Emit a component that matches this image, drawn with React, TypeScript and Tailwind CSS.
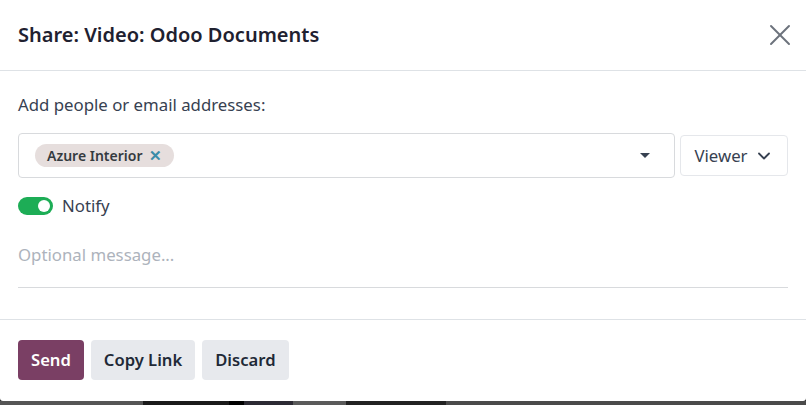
import { X, ChevronDown } from 'lucide-react';

const font = { fontFamily: '"Noto Sans", "Open Sans", sans-serif' };

export default function App() {
  return (
    <div className="w-[806px] h-[405px] bg-[#222] flex flex-col overflow-hidden" style={font}>
      <div className="bg-white h-[401px] flex flex-col rounded-b-[3px]">
        {/* header */}
        <div className="h-[71px] flex items-center justify-between pl-[18px] pr-[8px] border-b border-[#dee2e6]">
          <h1 className="text-[20px] font-semibold text-[#1f2130]">Share: Video: Odoo Documents</h1>
          <button className="text-[#6c727c]">
            <X className="w-[36px] h-[36px]" strokeWidth={1.3} />
          </button>
        </div>

        {/* body */}
        <div className="flex-1 px-[18px] pt-[22px] border-b border-[#dee2e6]">
          <p className="text-[16.8px] text-[#374151] leading-[24px]">Add people or email addresses:</p>
          <div className="mt-[16px] flex items-center gap-[5px]">
            <div className="flex-1 h-[45px] border border-[#d8dadd] rounded-[4px] flex items-center pl-[16px] pr-[24px]">
              <span className="h-[23px] px-[12px] rounded-full bg-[#e6dedd] flex items-center gap-[7px] text-[14px] font-semibold text-[#343a40]">
                Azure Interior
                <span className="text-[#3a8ca8] text-[15px] leading-none font-bold">✕</span>
              </span>
              <span className="ml-auto w-0 h-0 border-l-[5px] border-r-[5px] border-t-[5px] border-l-transparent border-r-transparent border-t-[#374151]" />
            </div>
            <button className="w-[108px] h-[41px] border border-[#e5e7eb] rounded-[4px] flex items-center justify-center gap-[6px] text-[16.8px] text-[#374151]">
              Viewer
              <ChevronDown className="w-[20px] h-[20px]" strokeWidth={2.2} />
            </button>
          </div>

          <div className="mt-[15px] flex items-center gap-[9px]">
            <span className="w-[35px] h-[18px] rounded-full bg-[#1dad56] flex items-center justify-end pr-[3px]">
              <span className="w-[12px] h-[12px] rounded-full bg-white" />
            </span>
            <span className="text-[16.8px] text-[#374151]">Notify</span>
          </div>

          <div className="mt-[25px] pb-[20px] border-b border-[#d8dadd] text-[16.8px] text-[#adb3bc] leading-[24px]">
            Optional message...
          </div>
        </div>

        {/* footer */}
        <div className="h-[81px] flex items-center gap-[7px] px-[18px] pb-[1px]">
          <button className="h-[40px] px-[13px] rounded-[4px] bg-[#7a3f64] text-white text-[16.6px] font-semibold">Send</button>
          <button className="h-[40px] px-[13px] rounded-[4px] bg-[#e7e9ed] text-[#1f2937] text-[16.6px] font-semibold">Copy Link</button>
          <button className="h-[40px] px-[13px] rounded-[4px] bg-[#e7e9ed] text-[#1f2937] text-[16.6px] font-semibold">Discard</button>
        </div>
      </div>
      <div className="flex-1 flex">
        <div className="w-[143px] bg-[#555]" />
        <div className="w-[86px] bg-[#1a1a1a]" />
        <div className="w-[15px] bg-black" />
        <div className="w-[49px] bg-[#2c2a33]" />
        <div className="w-[53px] bg-[#5a5a5a]" />
        <div className="w-[100px] bg-[#222]" />
        <div className="flex-1 bg-[#4a4a4a]" />
      </div>
    </div>
  );
}
